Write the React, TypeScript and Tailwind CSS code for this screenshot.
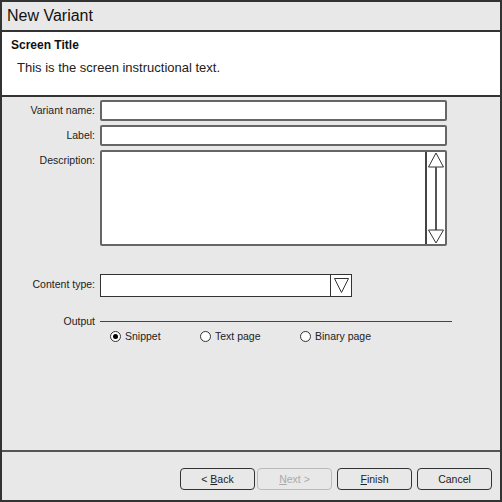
import React from 'react';

const font = { fontFamily: '"Liberation Sans", Arial, sans-serif' };

function Row({ label, children }: { label: string; children: React.ReactNode }) {
  return (
    <div className="flex items-start">
      <div className="w-[93px] pt-[4px] text-right text-[10.5px] leading-[13px] text-[#222]">{label}</div>
      <div className="ml-[5px]">{children}</div>
    </div>
  );
}

function Radio({ label, checked }: { label: string; checked?: boolean }) {
  return (
    <div className="flex items-center gap-[4px]">
      <span className="flex h-[11px] w-[11px] items-center justify-center rounded-full border border-[#333] bg-white">
        {checked && <span className="h-[5px] w-[5px] rounded-full bg-black" />}
      </span>
      <span className="text-[10.5px] leading-[13px] text-[#222]">{label}</span>
    </div>
  );
}

function Button({ children, disabled, className }: { children: React.ReactNode; disabled?: boolean; className?: string }) {
  return (
    <button
      className={
        (disabled
          ? 'h-[22px] w-[75px] rounded-[4px] border border-[#bbb] bg-[#e8e8e8] pt-[1px] text-[10.5px] text-[#aaa] '
          : 'h-[22px] w-[75px] rounded-[4px] border border-[#333] bg-[#e8e8e8] pt-[1px] text-[10.5px] text-[#222] ') + (className ?? '')
      }
    >
      {children}
    </button>
  );
}

export default function App() {
  return (
    <div style={font} className="flex h-[502px] w-[502px] flex-col border-2 border-[#333] bg-[#e8e8e8]">
      <div className="flex h-[30px] items-center border-b-2 border-[#333] pl-[5px] text-[16px] text-[#111]">New Variant</div>

      <div className="h-[65px] border-b-2 border-[#333] bg-white">
        <div className="pl-[9px] pt-[6px] text-[12px] font-bold leading-[15px] text-[#111]">Screen Title</div>
        <div className="pl-[15px] pt-[7px] text-[13px] leading-[15px] text-[#222]">This is the screen instructional text.</div>
      </div>

      <div className="flex flex-1 flex-col pt-[3px]">
        <div className="flex flex-col gap-[4px]">
          <Row label="Variant name:">
            <div className="h-[21px] w-[347px] rounded-[2px] border-2 border-[#666] bg-white" />
          </Row>
          <Row label="Label:">
            <div className="h-[21px] w-[347px] rounded-[2px] border-2 border-[#666] bg-white" />
          </Row>
          <Row label="Description:">
            <div className="flex h-[96px] w-[347px] justify-end rounded-[2px] border-2 border-[#666] bg-white">
              <div className="flex w-[20px] flex-col items-center border-l-2 border-[#444]">
                <svg width="18" height="92" viewBox="0 0 18 92">
                  <polygon points="9,1 1.5,15 16.5,15" fill="white" stroke="#333" strokeWidth="1" />
                  <line x1="9" y1="15" x2="9" y2="78" stroke="#555" strokeWidth="2" />
                  <polygon points="9,91 1.5,78 16.5,78" fill="white" stroke="#333" strokeWidth="1" />
                </svg>
              </div>
            </div>
          </Row>
        </div>

        <div className="mt-[28px]">
          <Row label="Content type:">
            <div className="flex h-[23px] w-[252px] justify-end border border-[#333] bg-white">
              <div className="flex w-[21px] items-center justify-center border-l border-[#333]">
                <svg width="17" height="17" viewBox="0 0 17 17">
                  <polygon points="1.5,1.5 15.5,1.5 8.5,15.5" fill="white" stroke="#333" strokeWidth="1" />
                </svg>
              </div>
            </div>
          </Row>
        </div>

        <div className="mt-[17px] flex items-center">
          <div className="w-[93px] pt-[1px] text-right text-[10.5px] leading-[13px] text-[#222]">Output</div>
          <div className="ml-[5px] h-px w-[352px] bg-[#444]" />
        </div>
        <div className="mt-[2px] flex pl-[108px]">
          <div className="w-[90px]"><Radio label="Snippet" checked /></div>
          <div className="w-[100px]"><Radio label="Text page" /></div>
          <Radio label="Binary page" />
        </div>
      </div>

      <div className="flex h-[50px] items-start justify-end border-t-2 border-[#555] pr-[8px] pt-[16px]">
        <Button><span>&lt; <u>B</u>ack</span></Button>
        <Button disabled className="ml-[2px]"><span><u>N</u>ext &gt;</span></Button>
        <Button className="ml-[5px]"><span><u>F</u>inish</span></Button>
        <Button className="ml-[5px]">Cancel</Button>
      </div>
    </div>
  );
}
